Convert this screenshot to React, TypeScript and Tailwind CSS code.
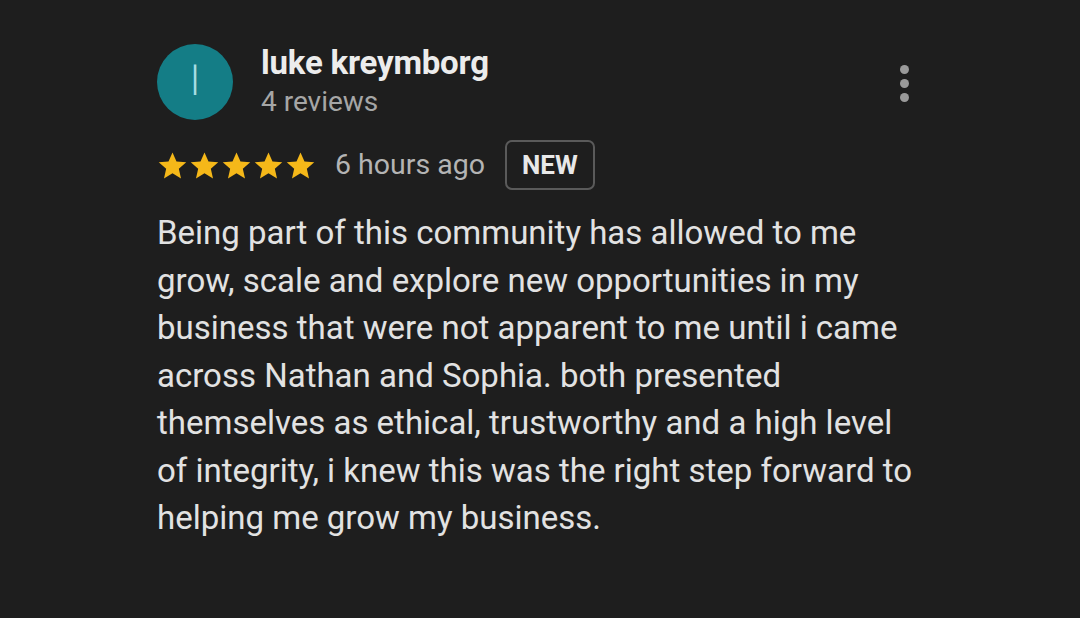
import React from "react";

function Star() {
  return (
    <svg viewBox="0 0 24 24" className="w-[33px] h-[33px] -mx-[0.5px]" fill="#f5b819">
      <path d="M12 2.5l2.9 6.6 7.1.6-5.4 4.7 1.6 7-6.2-3.7-6.2 3.7 1.6-7L2 9.7l7.1-.6z" />
    </svg>
  );
}

const LINES = [
  "Being part of this community has allowed to me",
  "grow, scale and explore new opportunities in my",
  "business that were not apparent to me until i came",
  "across Nathan and Sophia. both presented",
  "themselves as ethical, trustworthy and a high level",
  "of integrity, i knew this was the right step forward to",
  "helping me grow my business.",
];

export default function App() {
  return (
    <div className="w-[1080px] h-[618px] bg-[#1e1e1e] overflow-hidden" style={{ fontFamily: "Roboto, 'Noto Sans', sans-serif" }}>
      <div className="pl-[157px] pr-[150px] pt-[44px]">
        <div className="flex items-start">
          <div className="w-[76px] h-[76px] rounded-full bg-[#147d86] flex items-center justify-center text-[40px] text-[#a9dde4] font-light">
            l
          </div>
          <div className="ml-[28px] flex-1 -mt-[1px]">
            <div className="text-[33px] leading-[40px] font-bold text-[#ececec] tracking-[-0.2px]">luke kreymborg</div>
            <div className="mt-[2px] text-[28px] leading-[34px] text-[#a6a6a6]">4 reviews</div>
          </div>
          <div className="flex flex-col gap-[5px] items-center pt-[21px] pr-[21px]">
            <span className="w-[9px] h-[9px] rounded-full bg-[#9a9a9a]" />
            <span className="w-[9px] h-[9px] rounded-full bg-[#9a9a9a]" />
            <span className="w-[9px] h-[9px] rounded-full bg-[#9a9a9a]" />
          </div>
        </div>
        <div className="flex items-center mt-[20px]">
          <div className="flex -ml-[1px]">
            <Star /><Star /><Star /><Star /><Star />
          </div>
          <span className="ml-[19px] text-[28.5px] text-[#b4b4b4]">6 hours ago</span>
          <span className="ml-[20px] h-[50px] px-[15px] flex items-center rounded-[7px] border-2 border-[#5a5a5a] text-[26px] font-bold text-[#e8e8e8]">
            NEW
          </span>
        </div>
        <div className="mt-[19px] text-[33px] leading-[47.5px] text-[#e2e2e2]">
          {LINES.map((l) => (
            <div key={l} className="whitespace-nowrap">{l}</div>
          ))}
        </div>
      </div>
    </div>
  );
}
